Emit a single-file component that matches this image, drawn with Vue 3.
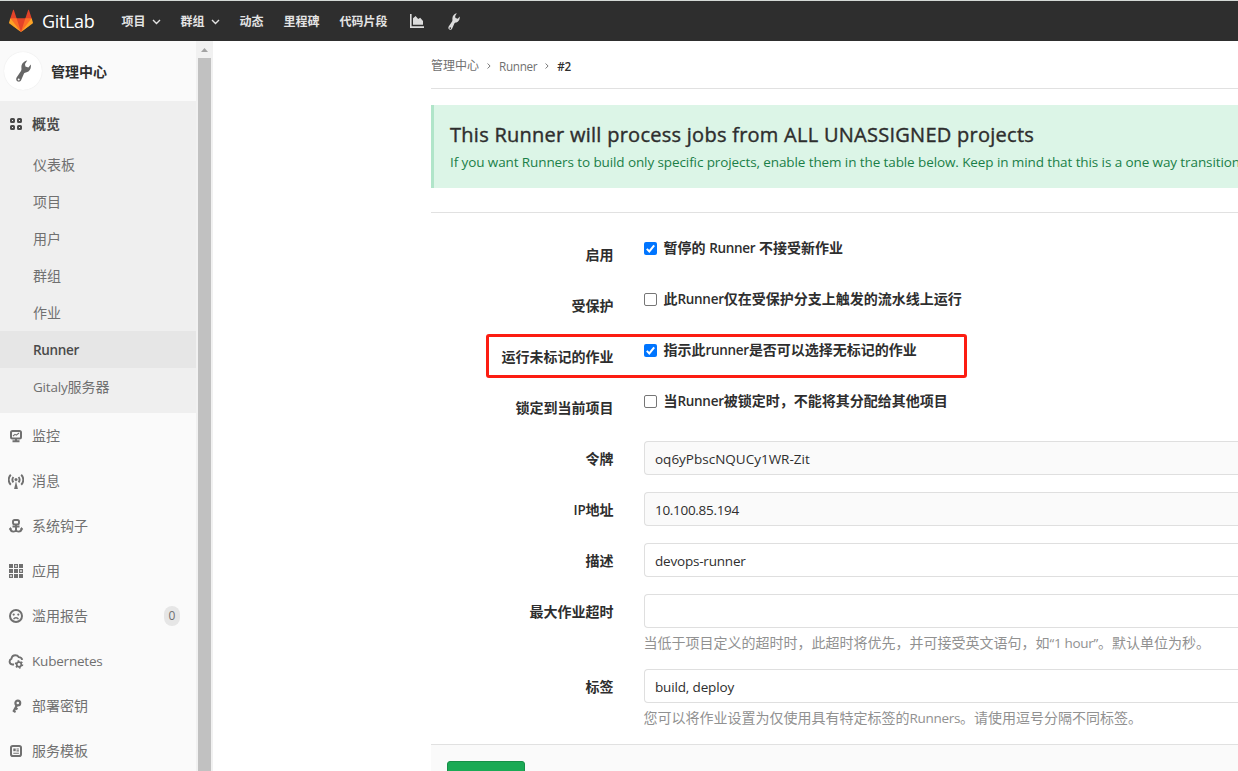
<script setup>
const subItems = [
  { text: '仪表板' },
  { text: '项目' },
  { text: '用户' },
  { text: '群组' },
  { text: '作业' },
  { latin: 'Runner', active: true },
  { latin: 'Gitaly', text: '服务器' },
]
const items = [
  { icon: 'monitor', text: '监控' },
  { icon: 'broadcast', text: '消息' },
  { icon: 'hook', text: '系统钩子' },
  { icon: 'apps', text: '应用' },
  { icon: 'abuse', text: '滥用报告', count: 0 },
  { icon: 'cloud', latin: 'Kubernetes' },
  { icon: 'key', text: '部署密钥' },
  { icon: 'template', text: '服务模板' },
]
const checks = [
  { label: '启用', on: true, parts: ['暂停的 ', 'Runner', ' 不接受新作业'] },
  { label: '受保护', on: false, parts: ['此', 'Runner', '仅在受保护分支上触发的流水线上运行'] },
  { label: '运行未标记的作业', on: true, marked: true, parts: ['指示此', 'runner', '是否可以选择无标记的作业'] },
  { label: '锁定到当前项目', on: false, parts: ['当', 'Runner', '被锁定时，不能将其分配给其他项目'] },
]
const wrench = 'M11.200.400C8 1 5.200 3.500 5.400 7.500c.1 1.500.2 2.300-.4 3.500L.6 17.600c-1 2 0 3.400 1.400 4 1.400.4 2.600-.2 3.200-1.600L8 13.600c.5-1 1.400-1.200 2.600-1.400 3.200-.8 4.800-4.200 4.200-7.800l-2.400 3.200-3-1L9 4zM2.700 18.600a1 1 0 1 1 0 2 1 1 0 0 1 0-2z'
</script>

<template>
  <div class="page">
    <header class="navbar">
      <svg class="logo" viewBox="0 0 36 36">
        <path fill="#e24329" d="M2 14l9.38 9v-9l-4-12.28c-.205-.632-1.176-.632-1.38 0z" />
        <path fill="#e24329" d="M34 14l-9.38 9v-9l4-12.28c.205-.632 1.176-.632 1.38 0z" />
        <path fill="#e24329" d="M18 34.38L3 14h30z" />
        <path fill="#fc6d26" d="M18 34.38L11.38 14H2l4 11z" />
        <path fill="#fc6d26" d="M18 34.38L24.62 14H34l-4 11z" />
        <path fill="#fca326" d="M2 14L.1 20.16c-.18.565 0 1.2.5 1.56l17.42 12.66z" />
        <path fill="#fca326" d="M34 14l1.9 6.16c.18.565 0 1.2-.5 1.56L18 34.38z" />
      </svg>
      <span class="brand">GitLab</span>
      <nav class="links">
        <span class="link">项目<svg class="caret" viewBox="0 0 9 6"><path d="M1 1l3.500 3.500L8 1" /></svg></span>
        <span class="link">群组<svg class="caret" viewBox="0 0 9 6"><path d="M1 1l3.500 3.500L8 1" /></svg></span>
        <span class="link">动态</span>
        <span class="link">里程碑</span>
        <span class="link">代码片段</span>
      </nav>
      <svg class="nav-chart" viewBox="0 0 14 14"><path d="M0 0h1.6v12.2H14V14H0zM3 10.8V4.2L5.6 2l2.6 3 2-1.200L13 7v3.800z" /></svg>
      <svg class="nav-wrench" viewBox="0 0 15 22"><path fill-rule="evenodd" :d="wrench" /></svg>
    </header>

    <div class="body">
      <aside class="sidebar">
        <div class="context">
          <span class="avatar">
            <svg viewBox="0 0 15 22"><path fill-rule="evenodd" :d="wrench" /></svg>
          </span>
          <span class="context-title">管理中心</span>
        </div>
        <div class="group">
          <div class="item strong">
            <svg class="icon" viewBox="0 0 16 16">
              <g fill="none" stroke="currentColor" stroke-width="2"><rect x="3" y="3" width="3" height="3" rx=".6" /><rect x="10" y="3" width="3" height="3" rx=".6" /><rect x="3" y="10" width="3" height="3" rx=".6" /><rect x="10" y="10" width="3" height="3" rx=".6" /></g>
            </svg>
            <span>概览</span>
          </div>
          <div v-for="s in subItems" :key="s.text || s.latin" class="sub" :class="{ active: s.active }">
            <span v-if="s.latin" class="lat">{{ s.latin }}</span>{{ s.text }}
          </div>
        </div>
        <div v-for="i in items" :key="i.icon" class="item">
          <svg class="icon" viewBox="0 0 16 16">
            <g v-if="i.icon === 'monitor'" fill="none" stroke="currentColor">
              <rect x="3" y="3" width="10" height="7.600" rx="1.500" stroke-width="2" />
              <path d="M5 8l2-1.600 1.300.8L11 5" stroke-width="1.100" />
              <path d="M8 10.600v2.400M4.500 13.200h7" stroke-width="2" />
            </g>
            <g v-else-if="i.icon === 'broadcast'" fill="none" stroke="currentColor" stroke-width="1.900">
              <path d="M2.800 1.800a7 7 0 0 0 0 10M13.200 1.800a7 7 0 0 1 0 10M5.400 4a4.500 4.500 0 0 0 0 5.400M10.600 4a4.500 4.500 0 0 1 0 5.400" />
              <circle cx="8" cy="6.600" r="1.500" fill="currentColor" stroke="none" />
              <path d="M8 8l1.900 8H6.100z" fill="currentColor" stroke="none" />
            </g>
            <g v-else-if="i.icon === 'hook'" fill="none" stroke="currentColor" stroke-width="1.900">
              <rect x="5" y="2" width="6" height="4.400" rx="1.600" />
              <path d="M8 6.500v7M4.500 8.500h7" />
              <path d="M2.300 10.300c0 2 1.400 3.300 3.200 3.300 1.300 0 2.100-.5 2.500-1.300.4.800 1.200 1.300 2.500 1.300 1.800 0 3.200-1.300 3.200-3.300" />
              <path d="M.8 11.500l1.600-2.500 1.800 2.500zM11.800 11.500L13.600 9l1.600 2.500z" fill="currentColor" stroke="none" />
            </g>
            <g v-else-if="i.icon === 'apps'" fill="currentColor">
              <path d="M1 1h4v4H1zM11 1h4v4h-4zM1 6h4v4H1zM6 6h4v4H6zM6 11h4v4H6zM11 11h4v4h-4z" />
              <path d="M6.600 1.600h2.800v2.800H6.600zM11.600 6.600h2.800v2.800h-2.800zM1.600 11.600h2.800v2.800H1.600z" fill="none" stroke="currentColor" stroke-width="1.200" />
            </g>
            <g v-else-if="i.icon === 'abuse'" fill="none" stroke="currentColor">
              <circle cx="8" cy="8" r="6" stroke-width="2" />
              <path d="M5.600 11.200c.9-1.900 3.900-1.900 4.800 0" stroke-width="1.400" />
              <circle cx="5.700" cy="6.600" r="1.100" fill="currentColor" stroke="none" />
              <circle cx="10.300" cy="6.600" r="1.100" fill="currentColor" stroke="none" />
            </g>
            <g v-else-if="i.icon === 'cloud'" fill="none" stroke="currentColor">
              <path d="M6 11.500H4.400C2.700 11.300 1.600 10 1.600 8.500c0-1.300.7-2.300 1.800-2.700C3.800 3.600 5.300 2.200 7.300 2.200c1.600 0 2.700.7 3.400 1.900 1.900 0 3.200 1 3.500 2.800" stroke-width="1.900" />
              <circle cx="11" cy="11.500" r="2.300" stroke-width="1.700" />
              <circle cx="11" cy="11.500" r="3.500" stroke-width="1.500" stroke-dasharray="1.600 2.065" />
            </g>
            <g v-else-if="i.icon === 'key'" fill="none" stroke="currentColor" stroke-width="2.200">
              <circle cx="9.800" cy="5" r="2.400" />
              <path d="M8.900 7.200L5.300 13.800M7.200 10l2.300 1.200M5.400 12.800l2.200 1.100" />
            </g>
            <g v-else fill="none" stroke="currentColor">
              <rect x="3" y="3" width="10" height="10" rx="1.800" stroke-width="2" />
              <path d="M5.300 5.500h2.400v2.700H5.300z" fill="currentColor" stroke="none" />
              <path d="M8.500 6h2.400M8.500 7.900h2.400M5.300 10.300h5.600" stroke-width="1.100" />
            </g>
          </svg>
          <span><span v-if="i.latin" class="lat">{{ i.latin }}</span>{{ i.text }}</span>
          <span v-if="i.count !== undefined" class="count">{{ i.count }}</span>
        </div>
      </aside>
      <div class="scrollbar">
        <svg class="arrow" viewBox="0 0 7 4"><path d="M0 4l3.500-4L7 4z" /></svg>
        <div class="thumb"></div>
      </div>

      <main class="main">
        <div class="crumbs">
          <span class="crumb-first">管理中心</span>
          <svg class="sep" viewBox="0 0 4 6"><path d="M.6.500l2.500 2.500L.6 5.500" /></svg>
          <span class="crumb-lat">Runner</span>
          <svg class="sep" viewBox="0 0 4 6"><path d="M.6.500l2.500 2.500L.6 5.500" /></svg>
          <span class="here">#2</span>
        </div>
        <section class="callout">
          <h4>This Runner will process jobs from ALL UNASSIGNED projects</h4>
          <p>If you want Runners to build only specific projects, enable them in the table below. Keep in mind that this is a one way transition</p>
        </section>
        <form class="form">
          <div v-for="c in checks" :key="c.label" class="row" :class="{ marked: c.marked }">
            <label class="label">{{ c.label }}</label>
            <div class="check">
              <span class="box" :class="{ on: c.on }">
                <svg v-if="c.on" viewBox="0 0 13 13"><path d="M2.800 6.900l2.500 2.500 4.900-6" /></svg>
              </span>
              <span class="check-text">{{ c.parts[0] }}<span class="lat">{{ c.parts[1] }}</span>{{ c.parts[2] }}</span>
            </div>
          </div>
          <div class="row">
            <label class="label">令牌</label>
            <div class="field readonly"><span class="token">oq6yPbscNQUCy1WR-Zit</span></div>
          </div>
          <div class="row">
            <label class="label"><span class="lat">IP</span>地址</label>
            <div class="field readonly"><span class="ip">10.100.85.194</span></div>
          </div>
          <div class="row">
            <label class="label">描述</label>
            <div class="field"><span class="desc">devops-runner</span></div>
          </div>
          <div class="row tall">
            <label class="label">最大作业超时</label>
            <div class="control">
              <div class="field"></div>
              <div class="help">当低于项目定义的超时时，此超时将优先，并可接受英文语句，如<span class="lat">“1 hour”</span>。默认单位为秒。</div>
            </div>
          </div>
          <div class="row tall">
            <label class="label">标签</label>
            <div class="control">
              <div class="field"><span class="tags">build, deploy</span></div>
              <div class="help">您可以将作业设置为仅使用具有特定标签的<span class="lat">Runners</span>。请使用逗号分隔不同标签。</div>
            </div>
          </div>
          <div class="actions"><div class="save"></div></div>
        </form>
      </main>
    </div>
  </div>
</template>

<style>
body { margin: 0; overflow: hidden; }
</style>

<style scoped>
.page {
  width: 1238px; height: 771px; overflow: hidden; box-sizing: border-box;
  display: flex; flex-direction: column; background: #fff; color: #2e2e2e;
  font: 14px/20px "Open Sans", "Noto Sans CJK SC", sans-serif; white-space: nowrap;
}
.page svg { display: block; flex: none; }
.lat { font-size: 13.5px; letter-spacing: -.2px; }
.navbar {
  flex: none; height: 41px; box-sizing: border-box; border-top: 1px solid #d4d9d6;
  background: #2e2e2e; display: flex; align-items: center; padding-left: 9px; color: #e3e3e3;
}
.logo { width: 24px; height: 24px; }
.brand { margin-left: 9px; width: 79.5px; font-size: 18px; line-height: 24px; letter-spacing: -.35px; color: #fff; }
.links { display: flex; gap: 20px; padding-top: 2px; }
.link { display: flex; align-items: center; font-size: 12px; font-weight: 700; }
.caret { width: 9px; height: 6px; margin-left: 6px; fill: none; stroke: #e3e3e3; stroke-width: 1.400; }
.nav-chart { width: 14px; height: 14px; margin-left: 22px; fill: #dcdcdc; }
.nav-wrench { width: 12px; height: 17px; margin-left: 24px; fill: #dcdcdc; }

.body { flex: 1; min-height: 0; display: flex; }
.sidebar { width: 196px; flex: none; background: #fafafa; overflow: hidden; color: #707070; }
.context { height: 60px; display: flex; align-items: center; padding-left: 4px; box-sizing: border-box; }
.avatar {
  width: 38px; height: 38px; border-radius: 50%; background: #fff; box-shadow: 0 0 1px #ddd;
  display: flex; align-items: center; justify-content: center;
}
.avatar svg { width: 15px; height: 22px; fill: #666; }
.context-title { margin-left: 9px; padding-top: 2px; color: #2e2e2e; font-weight: 600; }
.group { background: #efefef; padding-bottom: 8px; }
.item { height: 45px; display: flex; align-items: center; padding: 0 16px 0 8px; }
.icon { width: 16px; height: 16px; margin-right: 8px; color: #707070; }
.strong { color: #4a4a4a; font-weight: 700; }
.strong .icon { color: #4a4a4a; }
.sub { height: 37px; line-height: 37px; padding-left: 33px; }
.active { background: #e6e6e6; color: #4a4a4a; font-weight: 600; }
.active .lat { letter-spacing: -.35px; }
.count {
  margin-left: auto; width: 16px; height: 20px; border-radius: 10px; background: #e6e6e6;
  text-align: center; font-size: 12px; line-height: 20px;
}
.scrollbar { width: 17px; flex: none; background: #f1f1f1; display: flex; flex-direction: column; align-items: center; }
.arrow { width: 7px; height: 4px; margin: 7px 0 6px; fill: #a3a3a3; }
.thumb { width: 13px; flex: 1; background: #c1c1c1; }

.main { flex: 1; min-width: 0; margin-left: 218px; overflow: hidden; }
.crumbs {
  height: 48px; border-bottom: 1px solid #e1e1e1; box-sizing: border-box; padding-top: 2px;
  display: flex; align-items: center; font-size: 12px; color: #707070;
}
.crumb-lat { font-size: 11.7px; letter-spacing: -.3px; }
.sep { width: 4px; height: 6px; margin: 0 8px; fill: none; stroke: #777; stroke-width: 1; }
.here { color: #2e2e2e; font-size: 11.7px; font-weight: 600; letter-spacing: -.3px; }
.callout {
  height: 83px; margin-top: 16px; box-sizing: border-box; padding: 17px 0 0 16px;
  border-left: 3px solid #b0e5c9; background: #dcf5e7; overflow: hidden;
}
.callout h4 {
  margin: 0; font-size: 20px; line-height: 26px; font-weight: 400; letter-spacing: .265px;
  color: #2e2e2e; -webkit-text-stroke: .4px #2e2e2e;
}
.callout p { margin: 4px 0 0; font-size: 13.5px; line-height: 20px; letter-spacing: -.1px; color: #1a7f48; }
.form { margin-top: 24px; border-top: 1px solid #e1e1e1; padding-top: 25px; }
.row { height: 51px; display: grid; grid-template-columns: 182.5px 1fr; column-gap: 30.5px; align-items: start; }
.tall { height: 75px; }
.label { text-align: right; font-weight: 600; line-height: 20px; padding-top: 7px; }
.check { display: flex; align-items: center; height: 20px; font-weight: 600; }
.box {
  width: 13px; height: 13px; flex: none; box-sizing: border-box; border: 1px solid #767676;
  border-radius: 2px; margin-right: 6.500px; background: #fff;
}
.box.on { border: 0; background: #0075ff; }
.box svg { width: 13px; height: 13px; fill: none; stroke: #fff; stroke-width: 2; }
.check .lat { letter-spacing: -.3px; }
.marked { position: relative; }
.marked::after {
  content: ""; position: absolute; left: 55px; top: -6px; width: 481px; height: 44px;
  box-sizing: border-box; border: 3px solid #fc1d12; border-radius: 3px;
}
.field {
  height: 34px; box-sizing: border-box; border: 1px solid #dfdfdf; border-right: 0; margin-top: -1px;
  border-radius: 4px 0 0 4px; padding-left: 10px; font-size: 13.5px; line-height: 34px;
}
.control { min-width: 0; }
.ip { letter-spacing: -.3px; }
.desc { letter-spacing: -.2px; }
.tags { letter-spacing: -.15px; }
.readonly { background: #fafafa; }
.help { color: #919191; margin-top: 5px; margin-left: -.5px; }
.help .lat { letter-spacing: -.3px; }
.actions {
  height: 60px; margin-top: -1px; border-top: 1px solid #e1e1e1; background: #fafafa;
  padding: 16px 0 0 16px; box-sizing: border-box;
}
.save { width: 78px; height: 34px; box-sizing: border-box; border: 1px solid #168f48; border-radius: 3px; background: #1aaa55; }
</style>
